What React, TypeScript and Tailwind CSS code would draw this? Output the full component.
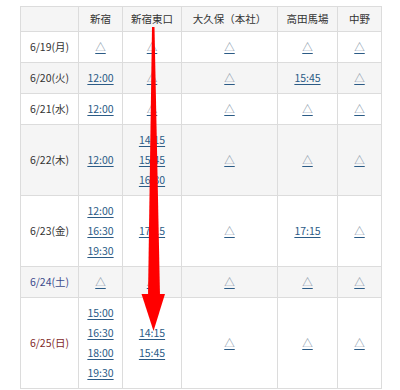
import React from "react";

type Cell = string | string[];

const header = ["", "新宿", "新宿東口", "大久保（本社）", "高田馬場", "中野"];

const rows: { date: string; tone?: "sat" | "sun"; gray: boolean; cells: Cell[] }[] = [
  { date: "6/19(月)", gray: false, cells: ["△", "△", "△", "△", "△"] },
  { date: "6/20(火)", gray: true, cells: ["12:00", "△", "△", "15:45", "△"] },
  { date: "6/21(水)", gray: false, cells: ["12:00", "△", "△", "△", "△"] },
  { date: "6/22(木)", gray: true, cells: ["12:00", ["14:15", "15:45", "16:30"], "△", "△", "△"] },
  { date: "6/23(金)", gray: false, cells: [["12:00", "16:30", "19:30"], "17:15", "△", "17:15", "△"] },
  { date: "6/24(土)", tone: "sat", gray: true, cells: ["△", "△", "△", "△", "△"] },
  { date: "6/25(日)", tone: "sun", gray: false, cells: [["15:00", "16:30", "18:00", "19:30"], ["14:15", "15:45"], "△", "△", "△"] },
];

function Links({ v }: { v: Cell }) {
  const list = Array.isArray(v) ? v : [v];
  return (
    <div className="flex flex-col items-center">
      {list.map((t, i) => (
        <a
          key={i}
          href="#"
          className={`block leading-[20px] underline underline-offset-2 decoration-[#2b5b86] ${
            t === "△" ? "text-[#7e90a4]" : "text-[#2b5b86]"
          }`}
        >
          {t}
        </a>
      ))}
    </div>
  );
}

export default function App() {
  return (
    <div
      className="relative w-[400px] h-[390px] bg-white text-[#333] text-[10.5px] overflow-hidden"
      style={{ fontFamily: '"Noto Sans CJK JP", "Noto Sans", sans-serif' }}
    >
      <div className="pt-[6px] pl-[20px]">
        <div className="grid grid-cols-[58px_44px_59px_96px_60px_44px] w-[362px] border-l border-t border-[#dcdcdc]">
          {header.map((h, i) => (
            <div
              key={i}
              className="h-[25px] flex items-center justify-center bg-[#f5f5f5] border-r border-b border-[#dcdcdc] whitespace-nowrap"
            >
              {h}
            </div>
          ))}
          {rows.map((r) => (
            <React.Fragment key={r.date}>
              <div
                className={`py-[5px] flex items-center justify-center border-r border-b border-[#dcdcdc] leading-[20px] ${
                  r.gray ? "bg-[#f5f5f5]" : "bg-white"
                } ${r.tone === "sat" ? "text-[#3b4a8c]" : r.tone === "sun" ? "text-[#7f2a2a]" : ""}`}
              >
                {r.date}
              </div>
              {r.cells.map((c, j) => (
                <div
                  key={j}
                  className={`py-[5px] flex items-center justify-center border-r border-b border-[#dcdcdc] ${
                    r.gray ? "bg-[#f5f5f5]" : "bg-white"
                  }`}
                >
                  <Links v={c} />
                </div>
              ))}
            </React.Fragment>
          ))}
        </div>
      </div>
      <svg
        className="absolute left-0 top-0 pointer-events-none"
        width="400"
        height="390"
        viewBox="0 0 400 390"
      >
        <polygon points="152,27 154.5,27 160,296 148,296" fill="#ff0000" />
        <polygon points="141.5,294 165,294 153.5,331" fill="#ff0000" />
      </svg>
    </div>
  );
}
